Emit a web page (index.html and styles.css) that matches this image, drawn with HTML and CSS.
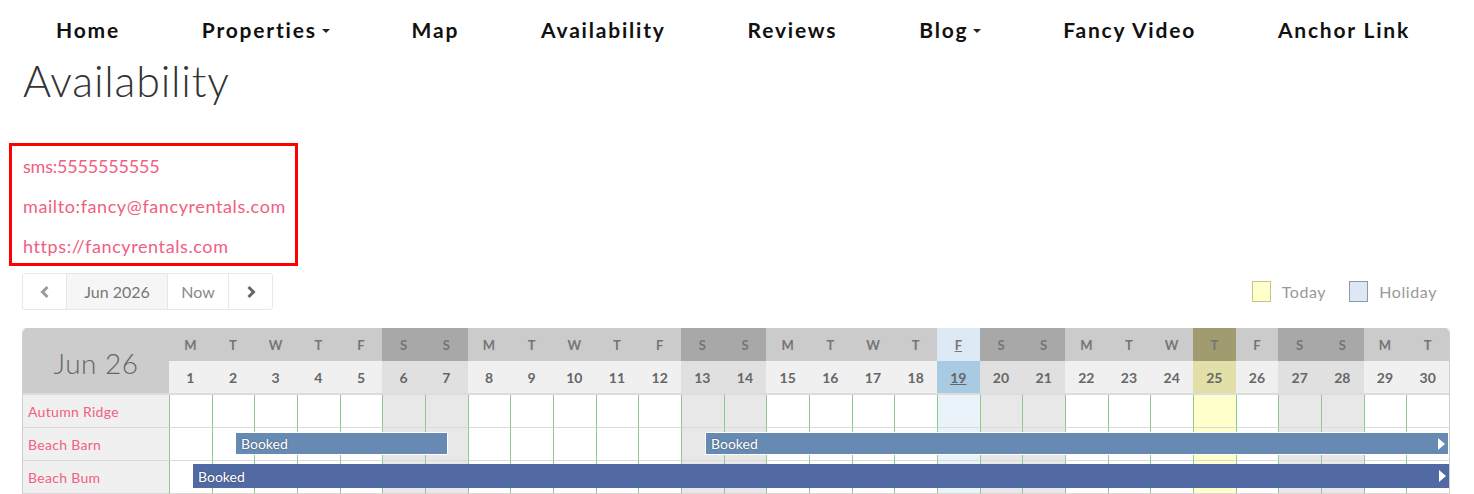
FILE: index.html
```html
<!DOCTYPE html>
<html lang="en">
<head>
<meta charset="utf-8">
<title>Availability</title>
<link rel="stylesheet" href="styles.css">
</head>
<body>
<nav class="nav">
  <a class="nav-item" href="#">Home</a>
  <a class="nav-item" href="#">Properties<span class="caret"></span></a>
  <a class="nav-item" href="#">Map</a>
  <a class="nav-item" href="#">Availability</a>
  <a class="nav-item" href="#">Reviews</a>
  <a class="nav-item" href="#">Blog<span class="caret"></span></a>
  <a class="nav-item" href="#">Fancy Video</a>
  <a class="nav-item" href="#">Anchor Link</a>
</nav>
<main class="page">
  <h1 class="title">Availability</h1>
  <div class="links-box">
    <a class="link link-tight" href="#">sms:5555555555</a>
    <a class="link" href="#">mailto:fancy@fancyrentals.com</a>
    <a class="link" href="#">https://fancyrentals.com</a>
  </div>
  <div class="toolbar">
    <div class="btn-group">
      <button class="btn btn-icon"><svg width="14" height="14" viewBox="0 0 14 14"><path d="M9.5 2 L4.5 7 L9.5 12" fill="none" stroke="#9a9a9a" stroke-width="3"/></svg></button>
      <button class="btn btn-month">Jun 2026</button>
      <button class="btn btn-now">Now</button>
      <button class="btn btn-icon"><svg width="14" height="14" viewBox="0 0 14 14"><path d="M4.5 2 L9.5 7 L4.5 12" fill="none" stroke="#666" stroke-width="3"/></svg></button>
    </div>
    <div class="legend">
      <span class="swatch swatch-today"></span><span class="legend-label">Today</span>
      <span class="swatch swatch-holiday"></span><span class="legend-label">Holiday</span>
    </div>
  </div>

  <div class="calendar">
    <div class="cal-head">
      <div class="month-cell">Jun 26</div>
      <div class="h">M</div><div class="h">T</div><div class="h">W</div><div class="h">T</div><div class="h">F</div><div class="h we">S</div><div class="h we">S</div>
      <div class="h">M</div><div class="h">T</div><div class="h">W</div><div class="h">T</div><div class="h">F</div><div class="h we">S</div><div class="h we">S</div>
      <div class="h">M</div><div class="h">T</div><div class="h">W</div><div class="h">T</div><div class="h ho"><u>F</u></div><div class="h we">S</div><div class="h we">S</div>
      <div class="h">M</div><div class="h">T</div><div class="h">W</div><div class="h td">T</div><div class="h">F</div><div class="h we">S</div><div class="h we">S</div>
      <div class="h">M</div><div class="h">T</div>
      <div class="d">1</div><div class="d">2</div><div class="d">3</div><div class="d">4</div><div class="d">5</div><div class="d we">6</div><div class="d we">7</div>
      <div class="d">8</div><div class="d">9</div><div class="d">10</div><div class="d">11</div><div class="d">12</div><div class="d we">13</div><div class="d we">14</div>
      <div class="d">15</div><div class="d">16</div><div class="d">17</div><div class="d">18</div><div class="d ho"><u>19</u></div><div class="d we">20</div><div class="d we">21</div>
      <div class="d">22</div><div class="d">23</div><div class="d">24</div><div class="d td">25</div><div class="d">26</div><div class="d we">27</div><div class="d we">28</div>
      <div class="d">29</div><div class="d">30</div>
    </div>

    <div class="cal-row">
      <div class="row-label">Autumn Ridge</div>
      <div class="c"></div><div class="c"></div><div class="c"></div><div class="c"></div><div class="c"></div><div class="c we"></div><div class="c we"></div>
      <div class="c"></div><div class="c"></div><div class="c"></div><div class="c"></div><div class="c"></div><div class="c we"></div><div class="c we"></div>
      <div class="c"></div><div class="c"></div><div class="c"></div><div class="c"></div><div class="c ho"></div><div class="c we"></div><div class="c we"></div>
      <div class="c"></div><div class="c"></div><div class="c"></div><div class="c td"></div><div class="c"></div><div class="c we"></div><div class="c we"></div>
      <div class="c"></div><div class="c"></div>
    </div>

    <div class="cal-row">
      <div class="row-label">Beach Barn</div>
      <div class="c"></div><div class="c"></div><div class="c"></div><div class="c"></div><div class="c"></div><div class="c we"></div><div class="c we"></div>
      <div class="c"></div><div class="c"></div><div class="c"></div><div class="c"></div><div class="c"></div><div class="c we"></div><div class="c we"></div>
      <div class="c"></div><div class="c"></div><div class="c"></div><div class="c"></div><div class="c ho"></div><div class="c we"></div><div class="c we"></div>
      <div class="c"></div><div class="c"></div><div class="c"></div><div class="c td"></div><div class="c"></div><div class="c we"></div><div class="c we"></div>
      <div class="c"></div><div class="c"></div>
      <div class="booking booking-a" style="left:212px;width:213px">Booked</div>
      <div class="booking booking-a booking-cont" style="left:682px;right:0">Booked</div>
    </div>

    <div class="cal-row">
      <div class="row-label">Beach Bum</div>
      <div class="c"></div><div class="c"></div><div class="c"></div><div class="c"></div><div class="c"></div><div class="c we"></div><div class="c we"></div>
      <div class="c"></div><div class="c"></div><div class="c"></div><div class="c"></div><div class="c"></div><div class="c we"></div><div class="c we"></div>
      <div class="c"></div><div class="c"></div><div class="c"></div><div class="c"></div><div class="c ho"></div><div class="c we"></div><div class="c we"></div>
      <div class="c"></div><div class="c"></div><div class="c"></div><div class="c td"></div><div class="c"></div><div class="c we"></div><div class="c we"></div>
      <div class="c"></div><div class="c"></div>
      <div class="booking booking-b booking-cont" style="left:170px;right:0">Booked</div>
    </div>
  </div>
</main>
</body>
</html>
```

FILE: styles.css
```css
* { box-sizing: border-box; }
html, body { margin: 0; padding: 0; background: #fff; }
body {
  font-family: Lato, "Open Sans", "Liberation Sans", sans-serif;
  color: #333;
  width: 1474px;
  overflow: hidden;
}

/* NAV */
.nav {
  display: flex;
  justify-content: space-between;
  align-items: center;
  height: 60px;
  padding: 0 64px 0 56px;
}
.nav-item {
  font-size: 21px;
  font-weight: 700;
  letter-spacing: 1.8px;
  color: #111;
  text-decoration: none;
  display: flex;
  align-items: center;
  margin-top: -1px;
}
.caret {
  display: inline-block;
  width: 0; height: 0;
  margin-left: 5px;
  margin-top: 3px;
  border-left: 4px solid transparent;
  border-right: 4px solid transparent;
  border-top: 4px solid #222;
}

/* PAGE */
.page {
  padding: 0 24px 0 22px;
}
.title {
  margin: 0 0 0 1px;
  font-size: 43px;
  font-weight: 300;
  line-height: 44px;
  color: #333;
  letter-spacing: 0.8px;
  position: relative;
  top: -1px;
}
.links-box {
  margin: 39px 0 0 -13px;
  width: 289px;
  height: 123px;
  border: 3px solid #f00;
  padding: 0 0 0 11px;
  display: flex;
  flex-direction: column;
}
.link {
  display: block;
  line-height: 40px;
  font-size: 18px;
  letter-spacing: 0.6px;
  color: #f06080;
  text-decoration: none;
  white-space: nowrap;
}
.link-tight { letter-spacing: -0.2px; }

/* TOOLBAR */
.toolbar {
  margin-top: 7px;
  display: flex;
  justify-content: space-between;
  align-items: center;
}
.btn-group {
  display: flex;
  height: 37px;
}
.btn {
  font-family: inherit;
  font-size: 16px;
  color: #777;
  background: #fff;
  border: 1px solid #e8e8e8;
  margin-left: -1px;
  padding: 0;
  height: 37px;
  display: flex;
  align-items: center;
  justify-content: center;
}
.btn:first-child { margin-left: 0; border-radius: 3px 0 0 3px; }
.btn:last-child { border-radius: 0 3px 3px 0; }
.btn-icon { width: 45px; }
.btn-month { width: 102px; background: #f6f6f6; }
.btn-now { width: 62px; color: #888; }
.legend {
  display: flex;
  align-items: center;
  margin-right: 13px;
}
.swatch {
  width: 19px;
  height: 21px;
  border: 1px solid;
  margin-right: 11px;
}
.swatch-today { background: #ffffcc; border-color: #c4c48c; }
.swatch-holiday { background: #dde8f4; border-color: #8e9aa8; margin-left: 23px; }
.legend-label { font-size: 16px; color: #999; letter-spacing: 0.6px; }

/* CALENDAR */
.calendar {
  margin-top: 18px;
  width: 1428px;
  border-left: 1px solid #cfcfcf;
  border-right: 1px solid #cfcfcf;
  border-radius: 5px 5px 0 0;
  overflow: hidden;
}
.cal-head {
  display: grid;
  grid-template-columns: 146px repeat(30, 1fr);
  grid-template-rows: 33px 32px;
  border-bottom: 2px solid #dcdcdc;
}
.month-cell {
  grid-row: span 2;
  background: #ccc;
  display: flex;
  align-items: center;
  justify-content: center;
  font-size: 28px;
  font-weight: 300;
  letter-spacing: 0.5px;
  color: #666;
  padding-top: 5px;
}
.h, .d {
  display: flex;
  align-items: center;
  justify-content: center;
  font-size: 13px;
  color: #757575;
}
.h { background: #cbcbcb; font-weight: 700; }
.h.we { background: #a8a8a8; }
.h.ho { background: #dde9f5; }
.h.td { background: #a09c70; }
.d { background: #f0f0f0; font-weight: 700; color: #666; font-size: 14px; }
.d.we { background: #e0e0e0; }
.d.ho { background: #a8cae2; }
.d.td { background: #e2e0a8; }

.cal-row {
  position: relative;
  display: grid;
  grid-template-columns: 146px repeat(30, 1fr);
  height: 33px;
}
.row-label {
  background: #f0f0f0;
  border-bottom: 1px solid #dadada;
  color: #f06080;
  font-size: 14px;
  letter-spacing: 0.3px;
  padding-left: 5px;
  padding-top: 1px;
  display: flex;
  align-items: center;
}
.c {
  border-left: 1px solid #8acb8a;
  border-bottom: 1px solid #dadada;
  background: #fff;
}
.c.we { background: #e8e8e8; }
.c.ho { background: #eaf2fa; }
.c.td { background: #ffffcc; }

.booking {
  position: absolute;
  color: #fff;
  font-size: 14px;
  padding-left: 5px;
  display: flex;
  align-items: center;
  text-shadow: 0 0 2px rgba(0,0,0,0.35);
  white-space: nowrap;
}
.booking-a {
  top: 4px;
  height: 23px;
  background: #668ab1;
  border: 1px solid #fff;
}
.booking-b {
  top: 3px;
  height: 24px;
  background: #526aa3;
}
.booking-cont::after {
  content: "";
  position: absolute;
  right: 3px;
  top: 50%;
  margin-top: -6px;
  border-top: 6px solid transparent;
  border-bottom: 6px solid transparent;
  border-left: 7px solid #fff;
}
```
